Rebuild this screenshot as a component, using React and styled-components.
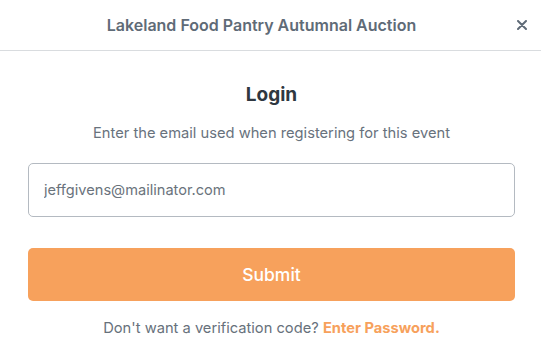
import styled, { createGlobalStyle } from "styled-components";

const GlobalStyle = createGlobalStyle`
  body {
    margin: 0;
    background: #fff;
    font-family: Inter, "Noto Sans", sans-serif;
  }
`;

const Modal = styled.div`
  width: 541px;
  height: 364px;
  background: #fff;
`;

const Header = styled.div`
  height: 51px;
  padding: 0 10px 1px;
  border-bottom: 1px solid #d9dcdf;
  display: flex;
  align-items: center;
  box-sizing: border-box;
`;

const Title = styled.h1`
  flex: 1;
  margin: 0;
  text-align: center;
  font-size: 16px;
  font-weight: 600;
  color: #5f6b77;
`;

const Close = styled.button`
  width: 18px;
  height: 18px;
  padding: 0;
  border: none;
  background: none;
  display: flex;
  align-items: center;
  justify-content: center;
  cursor: pointer;
`;

const Body = styled.div`
  padding: 32px 26px 0 28px;
  display: flex;
  flex-direction: column;
  align-items: center;
`;

const Heading = styled.h2`
  margin: 0;
  font-size: 19px;
  font-weight: 700;
  color: #2f3740;
  line-height: 24px;
`;

const Subtitle = styled.p`
  margin: 16px 0 0;
  font-size: 14.7px;
  color: #68727d;
  line-height: 20px;
`;

const Input = styled.input`
  margin-top: 20px;
  width: 100%;
  height: 54px;
  box-sizing: border-box;
  border: 1px solid #b4bac1;
  border-radius: 5px;
  padding: 0 15px;
  font-family: inherit;
  font-size: 14.6px;
  color: #6a737c;
  outline: none;
`;

const Submit = styled.button`
  margin-top: 31px;
  width: 100%;
  height: 53px;
  border: none;
  border-radius: 5px;
  background: #f7a15c;
  color: #fff;
  font-family: inherit;
  font-size: 17.5px;
  font-weight: 500;
  cursor: pointer;
`;

const Footer = styled.p`
  margin: 17px 0 0;
  font-size: 14.7px;
  color: #67717b;
  line-height: 20px;
`;

const Link = styled.a`
  color: #f7a15c;
  font-weight: 700;
  text-decoration: none;
`;

const App = () => {
  return (
    <>
      <GlobalStyle />
      <Modal>
        <Header>
          <Title>Lakeland Food Pantry Autumnal Auction</Title>
          <Close aria-label="Close">
            <svg width="10" height="10" viewBox="0 0 10 10">
              <path d="M1 1L9 9M9 1L1 9" stroke="#5f6b77" strokeWidth="2" strokeLinecap="round" />
            </svg>
          </Close>
        </Header>
        <Body>
          <Heading>Login</Heading>
          <Subtitle>Enter the email used when registering for this event</Subtitle>
          <Input defaultValue="jeffgivens@mailinator.com" />
          <Submit>Submit</Submit>
          <Footer>
            Don't want a verification code? <Link href="#">Enter Password.</Link>
          </Footer>
        </Body>
      </Modal>
    </>
  );
};

export default App;
